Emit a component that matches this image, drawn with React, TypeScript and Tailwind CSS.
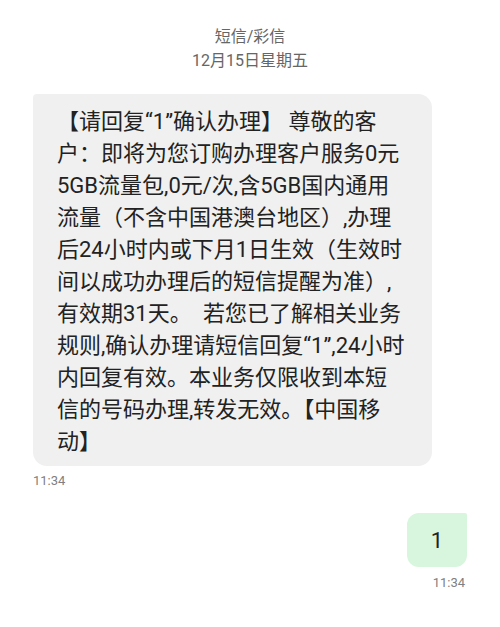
import React from "react";

const lines = [
  "【请回复“1”确认办理】 尊敬的客",
  "户：即将为您订购办理客户服务0元",
  "5GB流量包,0元/次,含5GB国内通用",
  "流量（不含中国港澳台地区）,办理",
  "后24小时内或下月1日生效（生效时",
  "间以成功办理后的短信提醒为准）,",
  "有效期31天。\u2002若您已了解相关业务",
  "规则,确认办理请短信回复“1”,24小时",
  "内回复有效。本业务仅限收到本短",
  "信的号码办理,转发无效。【中国移",
  "动】",
];

export default function App() {
  return (
    <div
      className="w-[500px] h-[627px] bg-white overflow-hidden"
      style={{ fontFamily: "Roboto, 'Noto Sans CJK SC', sans-serif" }}
    >
      <div className="pt-[25px] flex flex-col items-center text-[16px] leading-[24px] text-[#666666]">
        <div>短信/彩信</div>
        <div>12月15日星期五</div>
      </div>

      <div className="ml-[33px] mt-[21px] w-[399px] bg-[#f0f0f0] rounded-tl-[4px] rounded-tr-[14px] rounded-br-[14px] rounded-bl-[14px] pl-[24px] pt-[12px] pb-[8px]">
        {lines.map((l, i) => (
          <div
            key={i}
            className="whitespace-pre text-[22px] leading-[32px] text-[#222222]"
          >
            {l}
          </div>
        ))}
      </div>
      <div className="ml-[33px] mt-[5px] text-[13px] leading-[20px] text-[#808080]">11:34</div>

      <div className="flex justify-end mr-[33px] mt-[22px]">
        <div className="w-[60px] h-[54px] bg-[#d8f5dd] rounded-tl-[12px] rounded-tr-[2px] rounded-br-[12px] rounded-bl-[12px] flex items-center justify-center text-[22px] text-[#222222]">
          1
        </div>
      </div>
      <div className="flex justify-end mr-[35px] mt-[6px] text-[13px] leading-[20px] text-[#808080]">11:34</div>
    </div>
  );
}
